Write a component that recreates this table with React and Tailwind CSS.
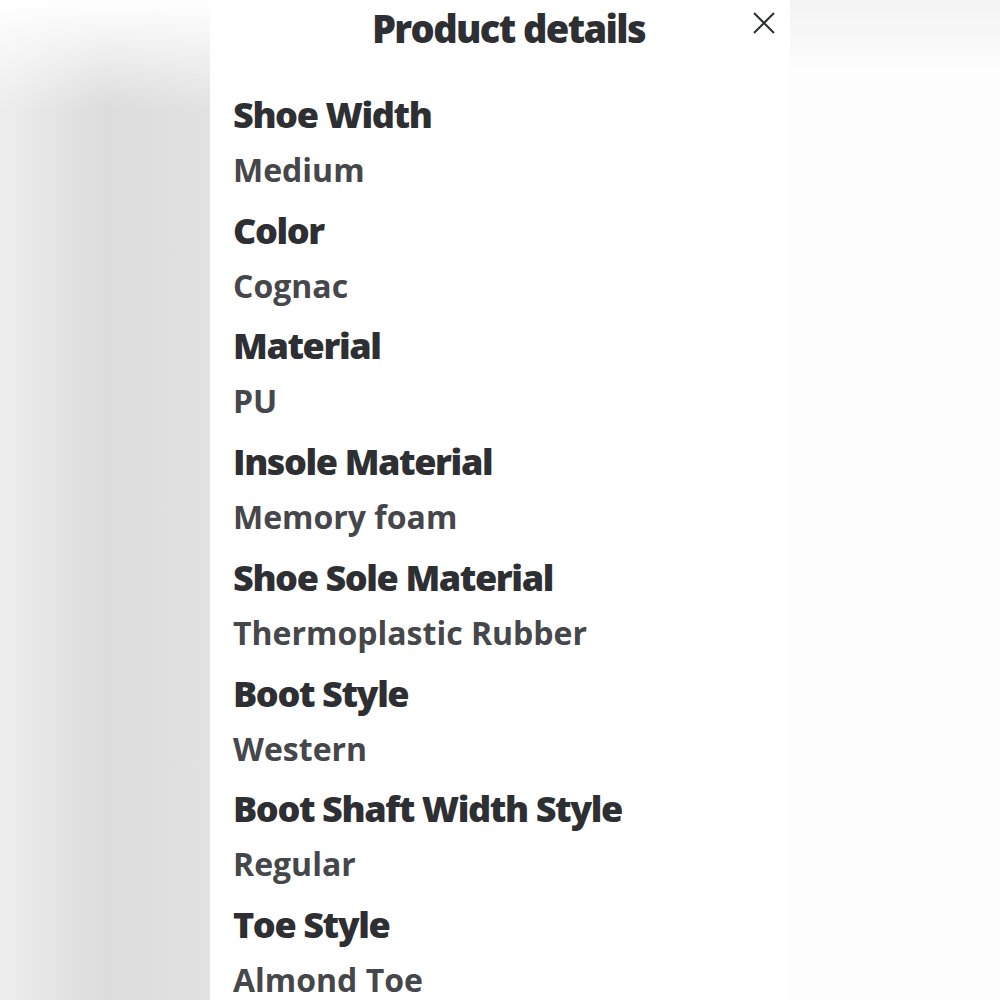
import React from 'react';

const details = [
  { label: 'Shoe Width', value: 'Medium' },
  { label: 'Color', value: 'Cognac' },
  { label: 'Material', value: 'PU' },
  { label: 'Insole Material', value: 'Memory foam' },
  { label: 'Shoe Sole Material', value: 'Thermoplastic Rubber' },
  { label: 'Boot Style', value: 'Western' },
  { label: 'Boot Shaft Width Style', value: 'Regular' },
  { label: 'Toe Style', value: 'Almond Toe' },
];

export default function App() {
  return (
    <div className="flex h-[1000px] w-[1000px] overflow-hidden bg-white" style={{ fontFamily: '"Open Sans", Lato, sans-serif' }}>
      {/* blurred page behind the sheet */}
      <div className="relative w-[210px] bg-gradient-to-r from-[#eeeeee] via-[#dcdcdc] to-[#e2e2e2]">
        <div className="absolute inset-x-0 top-0 h-[110px] bg-gradient-to-b from-white to-transparent" />
      </div>

      <div className="flex w-[580px] flex-col bg-white pl-[23px]">
        <div className="relative flex h-[60px] items-center justify-center">
          <h1 className="pr-[6px] text-[38px] font-extrabold tracking-[-1.6px] text-[#2e2f32]">Product details</h1>
          <button className="absolute right-[10px] top-[7px] p-1 text-[#2e2f32]">
            <svg width="24" height="24" viewBox="0 0 24 24" fill="none" stroke="currentColor" strokeWidth="2">
              <path d="M2 2 L22 22 M22 2 L2 22" />
            </svg>
          </button>
        </div>
        <div className="mt-[30px]">
          {details.map((d) => (
            <div key={d.label}>
              <div className="text-[36px] font-extrabold leading-[55px] tracking-[-1.4px] text-[#2e2f32]">{d.label}</div>
              <div className="-mt-[2px] mb-[2px] text-[32px] font-bold leading-[60.7px] tracking-[0px] text-[#46474a]">{d.value}</div>
            </div>
          ))}
        </div>
      </div>

      <div className="relative w-[210px] bg-[#fdfdfd]">
        <div className="absolute inset-x-0 top-0 h-[70px] bg-gradient-to-b from-[#f3f3f3] to-transparent" />
      </div>
    </div>
  );
}
